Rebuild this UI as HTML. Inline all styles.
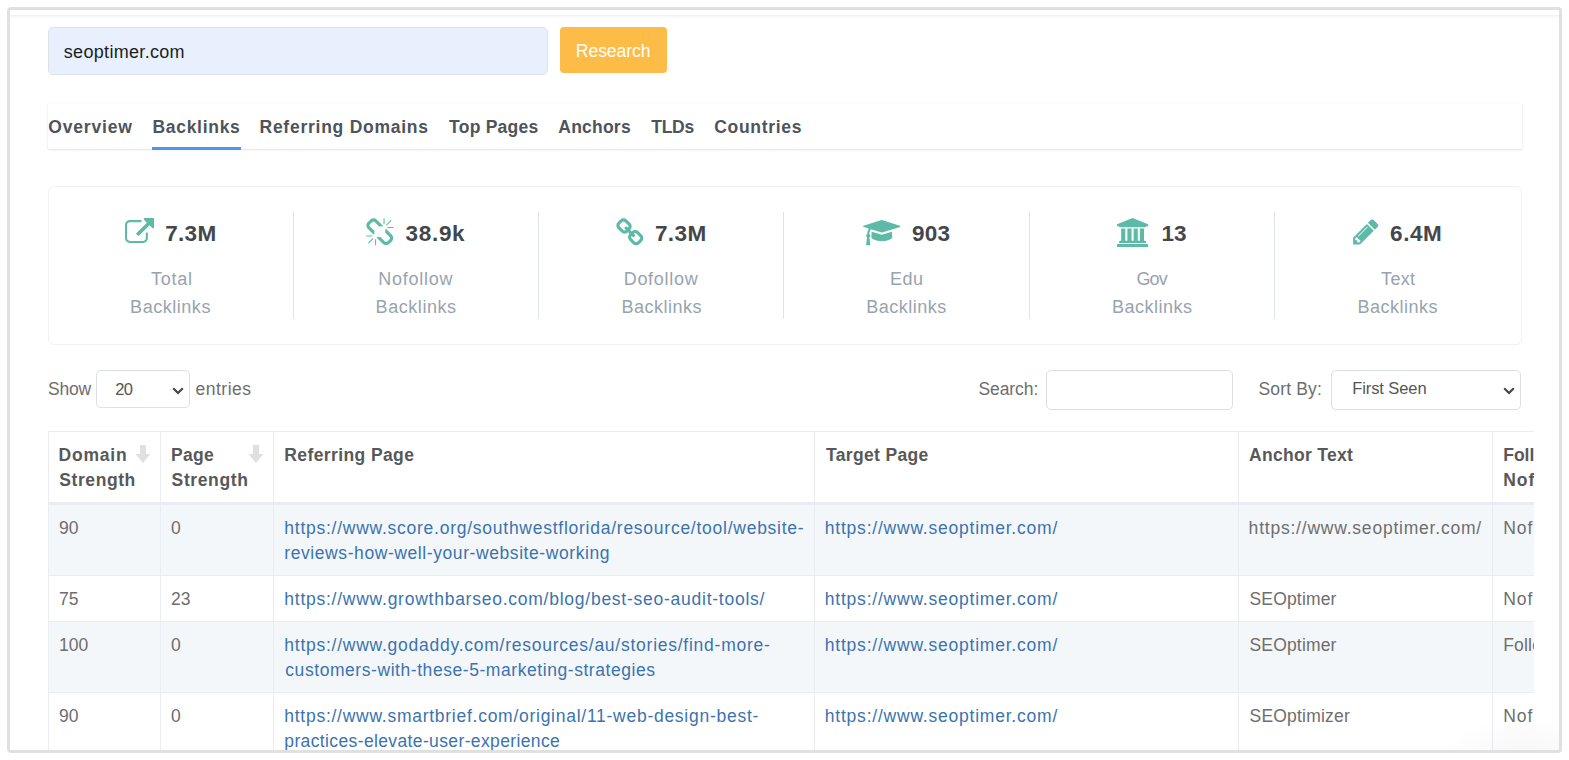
<!DOCTYPE html>
<html lang="en">
<head>
<meta charset="utf-8">
<title>Backlinks - seoptimer.com</title>
<style>
*{box-sizing:border-box}
html,body{margin:0;padding:0;background:#fff}
body{width:1569px;height:760px;overflow:hidden;position:relative;font-family:"Liberation Sans",sans-serif;font-size:17.500px;color:#6e6e6e}
.frame{position:absolute;left:7px;top:7px;width:1555px;height:746px;border:3px solid #e0e0e0;border-radius:4px;overflow:hidden;background:#fff}
.inner{position:absolute;left:-10px;top:-10px;width:1569px;height:760px}
.topline{position:absolute;left:10px;top:15px;width:1549px;height:4px;background:linear-gradient(#efefef,#f8f8f8 40%,#fff)}
.domain{position:absolute;left:48px;top:27px;width:500px;height:48px;background:#e8f0fe;border:1px solid #dde2ea;border-radius:5px;padding:0;line-height:48px;color:#1b1e21;font-size:18px;white-space:nowrap}
.domain span{position:absolute;top:0}
.btn{position:absolute;left:560px;top:27px;width:107px;height:46px;background:#fdbb48;border-radius:4px;color:#fff;line-height:49px;font-size:17.600px;white-space:nowrap}
.btn span{position:absolute;top:0}
.tabs{position:absolute;left:48px;top:103px;width:1474px;height:46px;box-shadow:0 1px 2px rgba(0,0,0,.11),0 0 1px rgba(0,0,0,.05);white-space:nowrap}
.tabs span{position:absolute;top:2px;height:43px;line-height:44px;font-weight:bold;font-size:17.500px;color:#4d545b}
.tabs i{position:absolute;left:104px;width:89px;top:44px;height:3px;background:#5594ea}
.card{position:absolute;left:48px;top:186px;width:1474px;height:159px;border:1px solid #f0f1f3;border-radius:6px}
.dv{position:absolute;top:25px;height:107px;width:1px;background:#dfe4ec}
.card span{position:absolute;white-space:nowrap}
.card .n{top:30.500px;line-height:32px;font-weight:bold;font-size:22.500px;color:#43474c}
.card .l{line-height:28px;font-size:18px;color:#98a3af}
.ic{position:absolute;fill:#5dbaa6}
.ctl{position:absolute;top:370px;height:40px;line-height:38px;font-size:17.500px;color:#6e6e6e;white-space:nowrap}
.ctl span,.sel span{position:absolute;top:0}
.sel,.inp{position:absolute;top:370px;height:40px;border:1px solid #dcdfe3;border-radius:5px;background:#fff;line-height:37px;font-size:16.500px;color:#555;white-space:nowrap}
.chev{position:absolute;right:4.500px;top:15px}
.tw{position:absolute;left:48px;top:431px;width:1486px;height:322px;overflow:hidden}
table{border-collapse:separate;border-spacing:0;table-layout:fixed;width:1640px}
th,td{border-left:1px solid #e9edf1;border-top:1px solid #e9edf1;padding:11px 10px 9px;line-height:25px;font-size:17.500px;vertical-align:top;text-align:left;font-weight:normal;color:#6e6e6e;white-space:nowrap}
th{font-weight:bold;color:#585858;border-bottom:2px solid #e9edf1;position:relative}
tbody tr:nth-child(odd) td{background:#f4f7fa}
td a{color:#3b73af;text-decoration:none}
td span,th span{position:relative}
.arr{position:absolute;top:13px}
.glow{position:absolute;left:1440px;top:700px;width:119px;height:50px;background:radial-gradient(ellipse 85px 45px at 85px 62px,rgba(0,0,0,.040),rgba(0,0,0,.020) 55%,rgba(0,0,0,0) 100%)}
</style>
</head>
<body>
<div class="frame"><div class="inner">
<div class="topline"></div>
<div class="domain"><span id="dom" style="letter-spacing:0.313px;left:14.80px">seoptimer.com</span></div>
<div class="btn"><span id="btn" style="letter-spacing:-0.073px;left:15.80px">Research</span></div>
<div class="tabs">
<span id="tab0" style="letter-spacing:0.841px;left:0.20px">Overview</span>
<span id="tab1" style="letter-spacing:0.715px;left:104.40px">Backlinks</span>
<span id="tab2" style="letter-spacing:0.748px;left:211.50px">Referring Domains</span>
<span id="tab3" style="letter-spacing:0.230px;left:401.10px">Top Pages</span>
<span id="tab4" style="letter-spacing:0.225px;left:510.30px">Anchors</span>
<span id="tab5" style="letter-spacing:-0.306px;left:603.30px">TLDs</span>
<span id="tab6" style="letter-spacing:0.683px;left:666.30px">Countries</span>
<i></i></div>
<div class="card">
<div class="dv" style="left:244px"></div>
<div class="dv" style="left:489px"></div>
<div class="dv" style="left:734px"></div>
<div class="dv" style="left:980px"></div>
<div class="dv" style="left:1225px"></div>
<svg class="ic" style="left:75.64px;top:30.97px" width="29.13" height="29.13" viewBox="0 0 1792 1792"><path d="M1408 928v320q0 119-84.500 203.500t-203.500 84.500h-832q-119 0-203.500-84.500t-84.500-203.500v-832q0-119 84.500-203.500t203.500-84.500h704q14 0 23 9t9 23v64q0 14-9 23t-23 9h-704q-66 0-113 47t-47 113v832q0 66 47 113t113 47h832q66 0 113-47t47-113v-320q0-14 9-23t23-9h64q14 0 23 9t9 23zm384-864v512q0 26-19 45t-45 19-45-19l-176-176-652 652q-10 10-23 10t-23-10l-114-114q-10-10-10-23t10-23l652-652-176-176q-19-19-19-45t19-45 45-19h512q26 0 45 19t19 45z"/></svg>
<span class="n" id="n0" style="letter-spacing:0.307px;left:116.20px">7.3M</span>
<span class="l" id="l0a" style="top:78px;letter-spacing:0.744px;left:102.00px">Total</span>
<span class="l" id="l0b" style="top:106px;letter-spacing:0.534px;left:81.10px">Backlinks</span>
<svg class="ic" style="left:316.04px;top:30.50px" width="29.62" height="29.62" viewBox="0 0 1792 1792"><path d="M503 1271l-256 256q-10 9-23 9-12 0-23-9-9-10-9-23t9-23l256-256q10-9 23-9t23 9q9 10 9 23t-9 23zm169 41v320q0 14-9 23t-23 9-23-9-9-23v-320q0-14 9-23t23-9 23 9 9 23zm-224-224q0 14-9 23t-23 9h-320q-14 0-23-9t-9-23 9-23 23-9h320q14 0 23 9t9 23zm1264 128q0 120-85 203l-147 146q-83 83-203 83-121 0-204-85l-334-335q-21-21-42-56l239-18 273 274q27 27 68 27.500t68-26.500l147-146q28-28 28-67 0-40-28-68l-274-275 18-239q35 21 56 42l336 336q84 86 84 204zm-617-724l-239 18-273-274q-28-28-68-28-39 0-68 27l-147 146q-28 28-28 67 0 40 28 68l274 274-18 240q-35-21-56-42l-336-336q-84-86-84-204 0-120 85-203l147-146q83-83 203-83 121 0 204 85l334 335q21 21 42 56zm633 84q0 14-9 23t-23 9h-320q-14 0-23-9t-9-23 9-23 23-9h320q14 0 23 9t9 23zm-544-544v320q0 14-9 23t-23 9-23-9-9-23v-320q0-14 9-23t23-9 23 9 9 23zm407 151l-256 256q-11 9-23 9t-23-9q-9-10-9-23t9-23l256-256q10-9 23-9t23 9q9 10 9 23t-9 23z"/></svg>
<span class="n" id="n1" style="letter-spacing:0.702px;left:356.50px">38.9k</span>
<span class="l" id="l1a" style="top:78px;letter-spacing:0.767px;left:329.20px">Nofollow</span>
<span class="l" id="l1b" style="top:106px;letter-spacing:0.559px;left:326.60px">Backlinks</span>
<svg class="ic" style="left:565.56px;top:30.67px" width="29.68" height="29.68" viewBox="0 0 1792 1792"><path d="M1520 1216q0-40-28-68l-208-208q-28-28-68-28-42 0-72 32 3 3 19 18.500t21.500 21.500 15 19 13 25.500 3.500 27.500q0 40-28 68t-68 28q-15 0-27.500-3.500t-25.500-13-19-15-21.500-21.500-18.500-19q-33 31-33 73 0 40 28 68l206 207q27 27 68 27 40 0 68-26l147-146q28-28 28-67zm-703-705q0-40-28-68l-206-207q-28-28-68-28-39 0-68 27l-147 146q-28 28-28 67 0 40 28 68l208 208q27 27 68 27 42 0 72-31-3-3-19-18.500t-21.500-21.500-15-19-13-25.500-3.500-27.500q0-40 28-68t68-28q15 0 27.500 3.500t25.500 13 19 15 21.500 21.500 18.500 19q33-31 33-73zm895 705q0 120-85 203l-147 146q-83 83-203 83-121 0-204-85l-206-207q-83-83-83-203 0-123 88-209l-88-88q-86 88-208 88-120 0-204-84l-208-208q-84-84-84-204t85-203l147-146q83-83 203-83 121 0 204 85l206 207q83 83 83 203 0 123-88 209l88 88q86-88 208-88 120 0 204 84l208 208q84 84 84 204z"/></svg>
<span class="n" id="n2" style="letter-spacing:0.407px;left:605.90px">7.3M</span>
<span class="l" id="l2a" style="top:78px;letter-spacing:0.710px;left:574.70px">Dofollow</span>
<span class="l" id="l2b" style="top:106px;letter-spacing:0.509px;left:572.40px">Backlinks</span>
<svg class="ic" style="left:813.74px;top:30.82px" width="37.62" height="29.26" viewBox="0 0 2304 1792"><path d="M1774 836l18 316q4 69-82 128t-235 93.500-323 34.500-323-34.500-235-93.500-82-128l18-316 574 181q22 7 48 7t48-7zm530-324q0 23-22 31l-1120 352q-4 1-10 1t-10-1l-652-206q-43 34-71 111.500t-34 178.500q63 36 63 109 0 69-58 107l58 433q2 14-8 25-9 11-24 11h-192q-15 0-24-11-10-11-8-25l58-433q-58-38-58-107 0-73 65-111 11-207 98-330l-333-104q-22-8-22-31t22-31l1120-352q4-1 10-1t10 1l1120 352q22 8 22 31z"/></svg>
<span class="n" id="n3" style="letter-spacing:0.187px;left:863.00px">903</span>
<span class="l" id="l3a" style="top:78px;letter-spacing:0.442px;left:841.10px">Edu</span>
<span class="l" id="l3b" style="top:106px;letter-spacing:0.497px;left:817.20px">Backlinks</span>
<svg class="ic" style="left:1067.76px;top:30.85px" width="33.26" height="29.10" viewBox="0 0 2048 1792"><path d="M960 0l960 384v128h-128q0 26-20.500 45t-48.500 19h-1526q-28 0-48.500-19t-20.500-45h-128v-128zm-704 640h256v768h128v-768h256v768h128v-768h256v768h128v-768h256v768h59q28 0 48.500 19t20.500 45v64h-1664v-64q0-26 20.500-45t48.500-19h59v-768zm1595 960q28 0 48.500 19t20.500 45v128h-1920v-128q0-26 20.500-45t48.500-19h1782z"/></svg>
<span class="n" id="n4" style="letter-spacing:0.087px;left:1112.40px">13</span>
<span class="l" id="l4a" style="top:78px;letter-spacing:-0.806px;left:1087.40px">Gov</span>
<span class="l" id="l4b" style="top:106px;letter-spacing:0.497px;left:1063.00px">Backlinks</span>
<svg class="ic" style="left:1301.98px;top:30.44px" width="29.68" height="29.68" viewBox="0 0 1792 1792"><path d="M491 1536l91-91-235-235-91 91v107h128v128h107zm523-928q0-22-22-22-10 0-17 7l-542 542q-7 7-7 17 0 22 22 22 10 0 17-7l542-542q7-7 7-17zm-54-192l416 416-832 832h-416v-416zm683 96q0 53-37 90l-166 166-416-416 166-165q36-38 90-38 53 0 91 38l235 234q37 39 37 91z"/></svg>
<span class="n" id="n5" style="letter-spacing:0.541px;left:1341.10px">6.4M</span>
<span class="l" id="l5a" style="top:78px;letter-spacing:0.296px;left:1332.10px">Text</span>
<span class="l" id="l5b" style="top:106px;letter-spacing:0.509px;left:1308.40px">Backlinks</span>
</div>
<div class="ctl" style="left:0"><span id="show" style="letter-spacing:-0.213px;left:48.00px">Show</span><span id="entries" style="letter-spacing:0.504px;left:195.50px">entries</span><span id="search" style="letter-spacing:-0.091px;left:978.50px">Search:</span><span id="sortby" style="letter-spacing:0.160px;left:1258.50px">Sort By:</span></div>
<div class="sel" style="left:96px;width:94px;height:38px;line-height:36px"><span id="s20" style="letter-spacing:-0.577px;left:18.20px">20</span><svg class="chev" width="14" height="10" viewBox="0 0 14 10"><path d="M2.200 2.300 L7 7 L11.800 2.300" fill="none" stroke="#454545" stroke-width="2.100"/></svg></div>
<div class="inp" style="left:1046px;width:187px"></div>
<div class="sel" style="left:1331px;width:190px;line-height:35px"><span id="first" style="letter-spacing:-0.091px;left:20.20px">First Seen</span><svg class="chev" width="14" height="10" viewBox="0 0 14 10"><path d="M2.200 2.300 L7 7 L11.800 2.300" fill="none" stroke="#454545" stroke-width="2.100"/></svg></div>
<div class="tw">
<table>
<colgroup><col style="width:112px"><col style="width:113px"><col style="width:541px"><col style="width:424px"><col style="width:254px"><col style="width:196px"></colgroup>
<thead><tr>
<th><span id="h0a" style="letter-spacing:0.803px;left:-0.50px">Domain</span><br><span id="h0b" style="letter-spacing:0.579px;left:0.30px">Strength</span><svg class="arr" style="left:86px" width="15" height="18" viewBox="0 0 15 18"><path d="M5 0h6v9h4.500l-7.500 9l-7.500-9h4.500z" fill="#e0e0e0"/></svg></th>
<th><span id="h1a" style="letter-spacing:0.302px;left:-0.10px">Page</span><br><span id="h1b" style="letter-spacing:0.621px;left:0.60px">Strength</span><svg class="arr" style="left:87px" width="15" height="18" viewBox="0 0 15 18"><path d="M5 0h6v9h4.500l-7.500 9l-7.500-9h4.500z" fill="#e0e0e0"/></svg></th>
<th><span id="h2" style="letter-spacing:0.396px;left:0.30px">Referring Page</span></th><th><span id="h3" style="letter-spacing:0.336px;left:1.00px">Target Page</span></th><th><span id="h4" style="letter-spacing:0.303px;left:0.00px">Anchor Text</span></th>
<th><span id="h5a" style="letter-spacing:0.000px;left:0.20px">Follow /</span><br><span id="h5b" style="letter-spacing:1.000px;left:0.20px">Nofollow</span></th></tr></thead>
<tbody>
<tr><td><span id="r1d" style="letter-spacing:0.000px;left:0.00px">90</span></td><td><span id="r1p" style="letter-spacing:0.000px;left:0.00px">0</span></td><td><a><span id="r1u1" style="letter-spacing:0.745px;left:0.30px">https://www.score.org/southwestflorida/resource/tool/website-</span><br><span id="r1u2" style="letter-spacing:0.579px;left:0.30px">reviews-how-well-your-website-working</span></a></td><td><a><span id="r1t" style="letter-spacing:0.779px;left:-0.21px">https://www.seoptimer.com/</span></a></td><td><span id="r1a" style="letter-spacing:0.783px;left:-0.40px">https://www.seoptimer.com/</span></td><td><span id="r1f" style="letter-spacing:1.000px;left:0.20px">Nofollow</span></td></tr>
<tr><td><span id="r2d" style="letter-spacing:0.000px;left:0.00px">75</span></td><td><span id="r2p" style="letter-spacing:0.000px;left:0.00px">23</span></td><td><a><span id="r2u1" style="letter-spacing:0.750px;left:0.30px">https://www.growthbarseo.com/blog/best-seo-audit-tools/</span></a></td><td><a><span id="r2t" style="letter-spacing:0.779px;left:-0.21px">https://www.seoptimer.com/</span></a></td><td><span id="r2a" style="letter-spacing:0.169px;left:0.50px">SEOptimer</span></td><td><span id="r2f" style="letter-spacing:1.000px;left:0.20px">Nofollow</span></td></tr>
<tr><td><span id="r3d" style="letter-spacing:0.000px;left:0.00px">100</span></td><td><span id="r3p" style="letter-spacing:0.000px;left:0.00px">0</span></td><td><a><span id="r3u1" style="letter-spacing:0.748px;left:0.30px">https://www.godaddy.com/resources/au/stories/find-more-</span><br><span id="r3u2" style="letter-spacing:0.560px;left:1.30px">customers-with-these-5-marketing-strategies</span></a></td><td><a><span id="r3t" style="letter-spacing:0.779px;left:-0.21px">https://www.seoptimer.com/</span></a></td><td><span id="r3a" style="letter-spacing:0.169px;left:0.50px">SEOptimer</span></td><td><span id="r3f" style="letter-spacing:0.200px;left:0.20px">Follow</span></td></tr>
<tr><td><span id="r4d" style="letter-spacing:0.000px;left:0.00px">90</span></td><td><span id="r4p" style="letter-spacing:0.000px;left:0.00px">0</span></td><td><a><span id="r4u1" style="letter-spacing:0.733px;left:0.30px">https://www.smartbrief.com/original/11-web-design-best-</span><br><span id="r4u2" style="letter-spacing:0.373px;left:0.30px">practices-elevate-user-experience</span></a></td><td><a><span id="r4t" style="letter-spacing:0.779px;left:-0.21px">https://www.seoptimer.com/</span></a></td><td><span id="r4a" style="letter-spacing:0.211px;left:0.50px">SEOptimizer</span></td><td><span id="r4f" style="letter-spacing:1.000px;left:0.20px">Nofollow</span></td></tr>
</tbody>
</table>
</div>
<div class="glow"></div>
</div></div>
</body>
</html>
